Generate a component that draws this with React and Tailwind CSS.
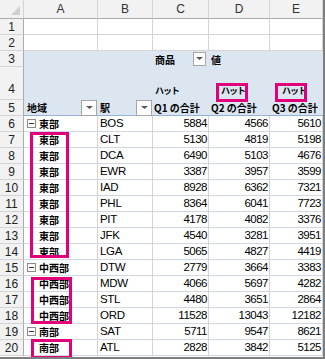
import React from "react";

const F = { fontFamily: '"Liberation Sans", "Noto Sans CJK JP", sans-serif' };
const J = { fontFamily: '"Noto Sans CJK JP", "Liberation Sans", sans-serif' };

const W = ["w-[74px]", "w-[55px]", "w-[56px]", "w-[61px]", "w-[53px]"];

function Drop({ cls }) {
  return (
    <div className={`flex items-center justify-center bg-white border border-[#a6a6a6] ${cls}`}>
      <svg width="7" height="4" viewBox="0 0 7 4">
        <polygon points="0,0 7,0 3.5,3" fill="#555" />
      </svg>
    </div>
  );
}

function Minus() {
  return (
    <div className="w-[9px] h-[9px] border border-[#8c8c8c] bg-white flex items-center justify-center mr-[3px]">
      <div className="w-[5px] h-px bg-[#333]" />
    </div>
  );
}

function RowHead({ n, h = "h-[16px]", align = "items-center" }) {
  return (
    <div
      className={`w-[24px] ${h} shrink-0 bg-[#f2f2f2] border-r border-b border-r-[#ababab] border-b-[#d4d4d4] flex ${align} justify-center text-[12px] text-[#222]`}
      style={F}
    >
      {n}
    </div>
  );
}

const data = [
  { n: 6, a: "東部", top: true, b: "BOS", c: 5884, d: 4566, e: 5610 },
  { n: 7, a: "東部", b: "CLT", c: 5130, d: 4819, e: 5198 },
  { n: 8, a: "東部", b: "DCA", c: 6490, d: 5103, e: 4676 },
  { n: 9, a: "東部", b: "EWR", c: 3387, d: 3957, e: 3599 },
  { n: 10, a: "東部", b: "IAD", c: 8928, d: 6362, e: 7321 },
  { n: 11, a: "東部", b: "PHL", c: 8364, d: 6041, e: 7723 },
  { n: 12, a: "東部", b: "PIT", c: 4178, d: 4082, e: 3376 },
  { n: 13, a: "東部", b: "JFK", c: 4540, d: 3281, e: 3951 },
  { n: 14, a: "東部", b: "LGA", c: 5065, d: 4827, e: 4419 },
  { n: 15, a: "中西部", top: true, b: "DTW", c: 2779, d: 3664, e: 3383 },
  { n: 16, a: "中西部", b: "MDW", c: 4066, d: 5697, e: 4282 },
  { n: 17, a: "中西部", b: "STL", c: 4480, d: 3651, e: 2864 },
  { n: 18, a: "中西部", b: "ORD", c: 11528, d: 13043, e: 12182 },
  { n: 19, a: "南部", top: true, b: "SAT", c: 5711, d: 9547, e: 8621 },
  { n: 20, a: "南部", b: "ATL", c: 2828, d: 3842, e: 5125 },
];

const cell = "h-[16px] shrink-0 border-r border-b border-r-[#d4d4d4] border-b-[#d0d7e5] flex items-center";

export default function App() {
  return (
    <div className="relative w-[325px] h-[359px] bg-white overflow-hidden border-r-2 border-b-2 border-[#7f7f7f]">
      {/* column headers */}
      <div className="flex h-[19px]">
        <div className="w-[24px] h-[19px] bg-[#f2f2f2] border-r border-b border-r-[#d4d4d4] border-b-[#ababab] flex items-end justify-end pr-[3px] pb-[3px]">
          <svg width="9" height="9" viewBox="0 0 9 9">
            <polygon points="9,0 9,9 0,9" fill="#d0d0d0" />
          </svg>
        </div>
        {["A", "B", "C", "D", "E"].map((l, i) => (
          <div
            key={l}
            className={`${W[i]} h-[19px] bg-[#f2f2f2] border-r border-b border-r-[#d4d4d4] border-b-[#ababab] flex items-center justify-center text-[12px] text-[#333]`}
            style={F}
          >
            {l}
          </div>
        ))}
      </div>

      {/* rows 1-2 */}
      {[1, 2].map((n) => (
        <div key={n} className="flex">
          <RowHead n={n} />
          {W.map((w, i) => (
            <div key={i} className={`${w} h-[16px] border-r border-b border-[#d4d4d4]`} />
          ))}
        </div>
      ))}

      {/* pivot header rows */}
      <div className="flex">
        <div className="flex flex-col">
          <RowHead n={3} />
          <RowHead n={4} h="h-[33px]" align="items-end pb-[1px]" />
          <RowHead n={5} />
        </div>
        <div className="flex-1 bg-[#dce6f1] flex flex-col text-[10px] font-bold text-black" style={J}>
          <div className="flex h-[16px] items-center">
            <div className="w-[129px]" />
            <div className="w-[56px] pl-[2px] flex items-center">
              <span className="w-[38px]">商品</span>
              <Drop cls="w-[13px] h-[14px]" />
            </div>
            <div className="pl-[2px]">値</div>
          </div>
          <div className="flex h-[33px] items-end pb-[1px] text-[9px] tracking-[-1px]">
            <div className="w-[129px]" />
            <div className="w-[56px] pl-[2px] h-[16px] flex items-center">ハット</div>
            <div className="w-[61px] pl-[12px] h-[16px] flex items-center">ハット</div>
            <div className="w-[53px] pl-[12px] h-[16px] flex items-center">ハット</div>
          </div>
          <div className="flex h-[16px] border-b border-[#95b3d7]">
            <div className="w-[74px] pl-[3px] flex items-center justify-between pr-[1px]">
              <span>地域</span>
              <Drop cls="w-[16px] h-[16px]" />
            </div>
            <div className="w-[55px] pl-[2px] flex items-center justify-between pr-[1px]">
              <span>駅</span>
              <Drop cls="w-[16px] h-[16px]" />
            </div>
            <div className="w-[56px] pl-[1px] flex items-center whitespace-nowrap">Q1 の合計</div>
            <div className="w-[61px] pl-[2px] flex items-center whitespace-nowrap">Q2 の合計</div>
            <div className="w-[53px] pl-[2px] flex items-center whitespace-nowrap">Q3 の合計</div>
          </div>
        </div>
      </div>

      {/* data rows */}
      {data.map((r) => (
        <div key={r.n} className="flex">
          <RowHead n={r.n} />
          <div className={`${W[0]} ${cell} pl-[3px] text-[10px] font-bold`} style={J}>
            {r.top ? <Minus /> : <div className="w-[12px]" />}
            <span>{r.a}</span>
          </div>
          <div className={`${W[1]} ${cell} pl-[2px] text-[11.5px] tracking-[-0.3px]`} style={F}>
            {r.b}
          </div>
          {[r.c, r.d, r.e].map((v, i) => (
            <div
              key={i}
              className={`${W[i + 2]} ${cell} justify-end pr-[1px] text-[11.5px] tracking-[-0.5px]`}
              style={F}
            >
              {v}
            </div>
          ))}
        </div>
      ))}

      {/* highlight boxes */}
      <div className="absolute left-[30px] top-[132px] w-[39px] h-[126px] border-[3px] border-[#e2007a]" />
      <div className="absolute left-[31px] top-[277px] w-[41px] h-[47px] border-[3px] border-[#e2007a]" />
      <div className="absolute left-[31px] top-[339px] w-[41px] h-[20px] border-[3px] border-[#e2007a]" />
      <div className="absolute left-[216px] top-[83px] w-[32px] h-[19px] border-[3px] border-[#e2007a]" />
      <div className="absolute left-[275px] top-[83px] w-[32px] h-[19px] border-[3px] border-[#e2007a]" />
    </div>
  );
}
